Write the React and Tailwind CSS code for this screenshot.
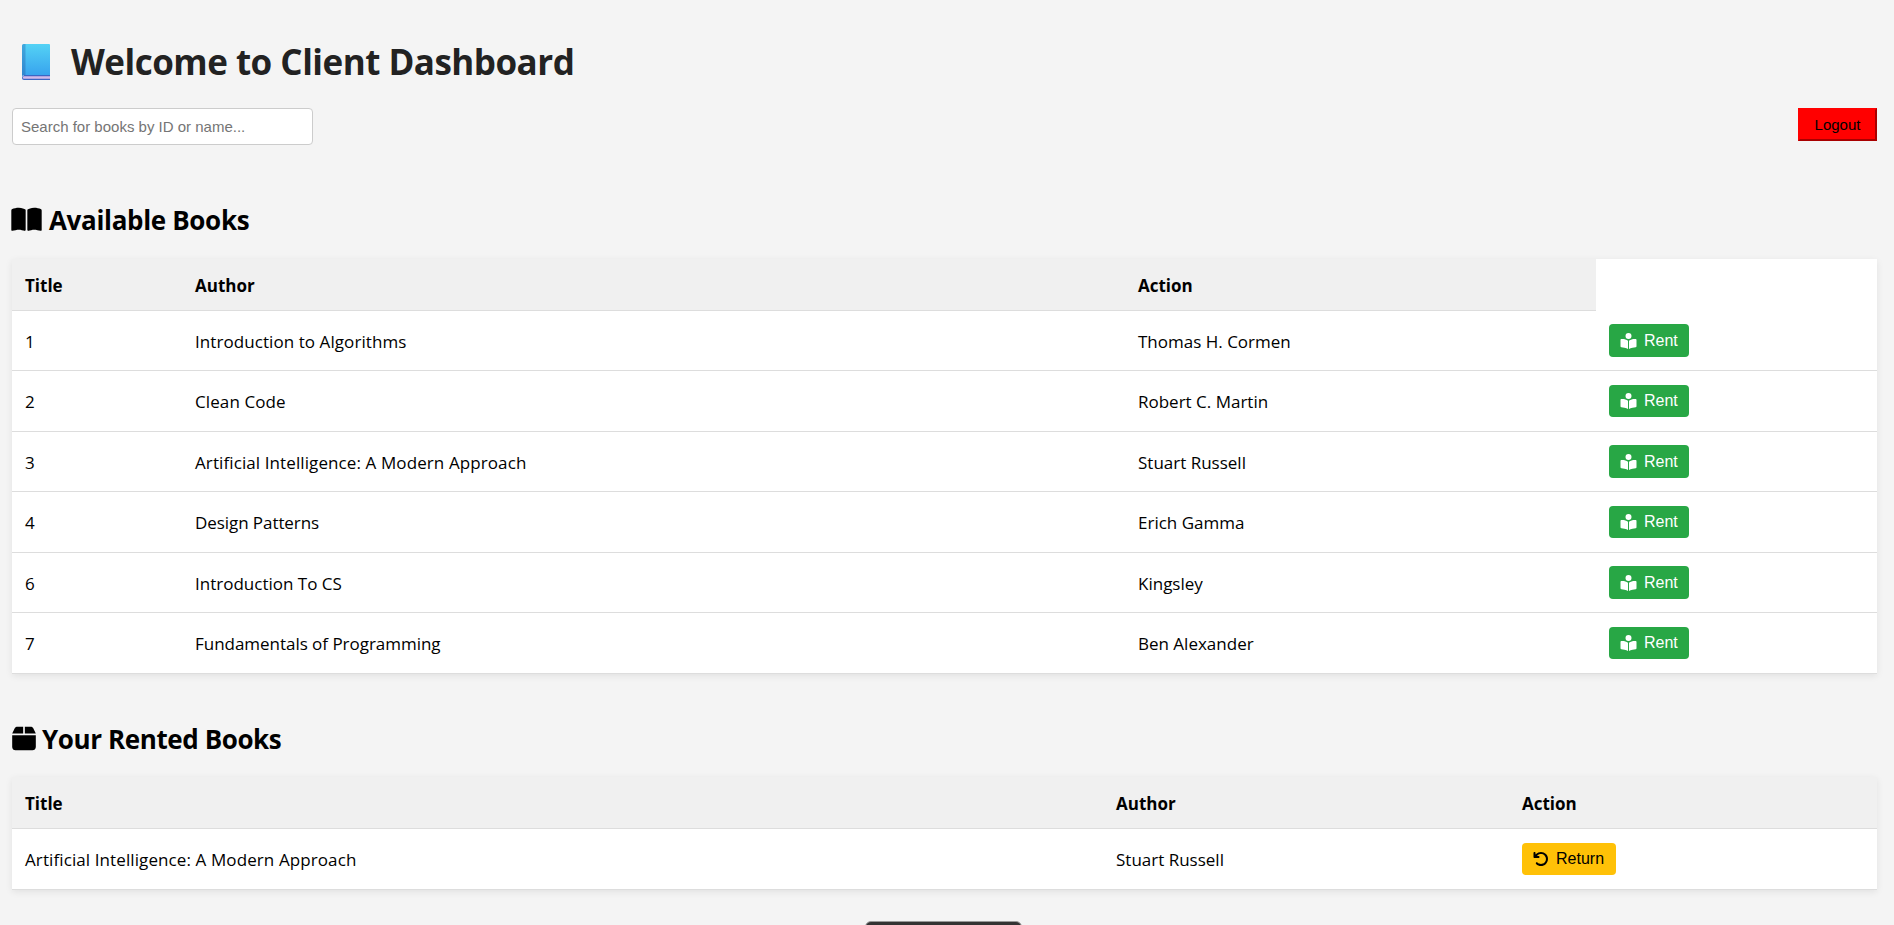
import React from "react";
import { FaBookOpen, FaBox, FaBookOpenReader, FaArrowRotateLeft } from "react-icons/fa6";

const available = [
  ["1", "Introduction to Algorithms", "Thomas H. Cormen", "tracking-[0.07px]"],
  ["2", "Clean Code", "Robert C. Martin", "tracking-[0.1px]"],
  ["3", "Artificial Intelligence: A Modern Approach", "Stuart Russell", "tracking-[0.1px]"],
  ["4", "Design Patterns", "Erich Gamma", "tracking-[-0.07px]"],
  ["6", "Introduction To CS", "Kingsley", "tracking-normal"],
  ["7", "Fundamentals of Programming", "Ben Alexander", "tracking-[-0.03px]"],
];

function BlueBook() {
  return (
    <svg className="block h-[36px] w-[29px]" viewBox="0 0 29 36">
      <defs>
        <linearGradient id="cover" x1="0" y1="0" x2="0" y2="1">
          <stop offset="0" stopColor="#54d2f5" />
          <stop offset="1" stopColor="#38a4ee" />
        </linearGradient>
        <linearGradient id="spine" x1="0" y1="0" x2="0" y2="1">
          <stop offset="0" stopColor="#41a9dd" />
          <stop offset="1" stopColor="#2f84cf" />
        </linearGradient>
      </defs>
      <path d="M2 31h26v5H2a2 2 0 0 1-2-2v-1z" fill="#3b66c4" />
      <path d="M2 32.300H28v2.400H2a1.200 1.200 0 0 1 0-2.400z" fill="#d3b9ea" />
      <path d="M3 0h24a1 1 0 0 1 1 1v30H3z" fill="url(#cover)" />
      <path d="M1.500 0H3.500v31H2q-1.500 0-2 2V1.500A1.500 1.500 0 0 1 1.500 0z" fill="url(#spine)" />
    </svg>
  );
}

function Th({ children }) {
  return <th className="h-[52px] border-b border-[#ddd] bg-[#f0f0f0] px-[13px] pt-[3px] text-left text-[17px] font-bold">{children}</th>;
}

function Td({ children }) {
  return <td className="border-b border-[#ddd] px-[13px] pt-[2px]">{children}</td>;
}

export default function App() {
  return (
    <div className="h-[925px] overflow-hidden bg-[#f4f4f4] px-[12px] pt-[36px] font-['Open_Sans','Noto_Sans',sans-serif] text-[17px] text-black">
      <h1 className="flex h-[52px] items-center text-[35px] font-bold tracking-[-0.51px] text-[#222]">
        <span className="mr-[20px] ml-[10px]"><BlueBook /></span>
        <span>Welcome to Client Dashboard</span>
      </h1>
      <div className="mt-[20px] flex items-start justify-between pr-[5px]">
        <input
          className="h-[37px] w-[301px] rounded-[4px] border border-[#ccc] bg-white px-[8px] font-['Liberation_Sans',sans-serif] text-[15px] placeholder:text-[#757575]"
          placeholder="Search for books by ID or name..."
        />
        <button className="h-[33px] w-[79px] border-2 border-t-[#f00] border-r-[#a80000] border-b-[#a80000] border-l-[#f00] bg-[#f00] pt-px font-['Liberation_Sans',sans-serif] text-[15px]">Logout</button>
      </div>
      <h2 className="mt-[55px] flex h-[40px] items-center gap-[7px] text-[26px] font-bold tracking-[-0.33px]">
        <FaBookOpen className="-ml-px mb-[1px] h-[27px] w-[31px]" />
        <span>Available Books</span>
      </h2>
      <table className="mt-[19px] w-[1865px] table-fixed border-separate border-spacing-0 bg-white shadow-[0_2px_7px_rgba(0,0,0,0.08)]">
        <colgroup>
          <col className="w-[170px]" /><col className="w-[943px]" /><col className="w-[471px]" /><col className="w-[281px]" />
        </colgroup>
        <thead><tr><Th>Title</Th><Th>Author</Th><Th>Action</Th></tr></thead>
        <tbody>
          {available.map(([id, title, author, tracking], i) => (
            <tr key={id} className={i % 2 ? "h-[61px]" : "h-[60px]"}>
              <Td>{id}</Td><Td><span className={tracking}>{title}</span></Td><Td>{author}</Td>
              <td className="border-b border-[#ddd] px-[13px]">
                <button className={`${i % 2 ? "h-[32px]" : "h-[33px]"} flex w-[80px] items-center gap-[7px] rounded-[4px] bg-[#28a745] pl-[11px] font-['Liberation_Sans',sans-serif] text-[16px] text-white`}>
                  <FaBookOpenReader className="h-[16px] w-[17px]" />Rent
                </button>
              </td>
            </tr>
          ))}
        </tbody>
      </table>
      <h2 className="mt-[45px] flex h-[40px] items-center gap-[6px] text-[26px] font-bold tracking-[-0.4px]">
        <FaBox className="mb-[2px] h-[27px] w-[24px]" />
        <span>Your Rented Books</span>
      </h2>
      <table className="mt-[18px] w-[1865px] table-fixed border-separate border-spacing-0 bg-white shadow-[0_2px_7px_rgba(0,0,0,0.08)]">
        <colgroup>
          <col className="w-[1091px]" /><col className="w-[406px]" /><col className="w-[368px]" />
        </colgroup>
        <thead><tr><Th>Title</Th><Th>Author</Th><Th>Action</Th></tr></thead>
        <tbody>
          <tr className="h-[61px]">
            <Td><span className="tracking-[0.1px]">Artificial Intelligence: A Modern Approach</span></Td><Td>Stuart Russell</Td>
            <td className="border-b border-[#ddd] px-[13px]">
              <button className="flex h-[32px] w-[94px] items-center gap-[7px] rounded-[4px] bg-[#ffc107] pl-[11px] font-['Liberation_Sans',sans-serif] text-[16px]">
                <FaArrowRotateLeft className="size-[16px]" />Return
              </button>
            </td>
          </tr>
        </tbody>
      </table>
      <div className="mt-[31px] ml-[853px] h-[30px] w-[157px] rounded-[6px] border border-[#999] bg-[#333]" />
    </div>
  );
}
